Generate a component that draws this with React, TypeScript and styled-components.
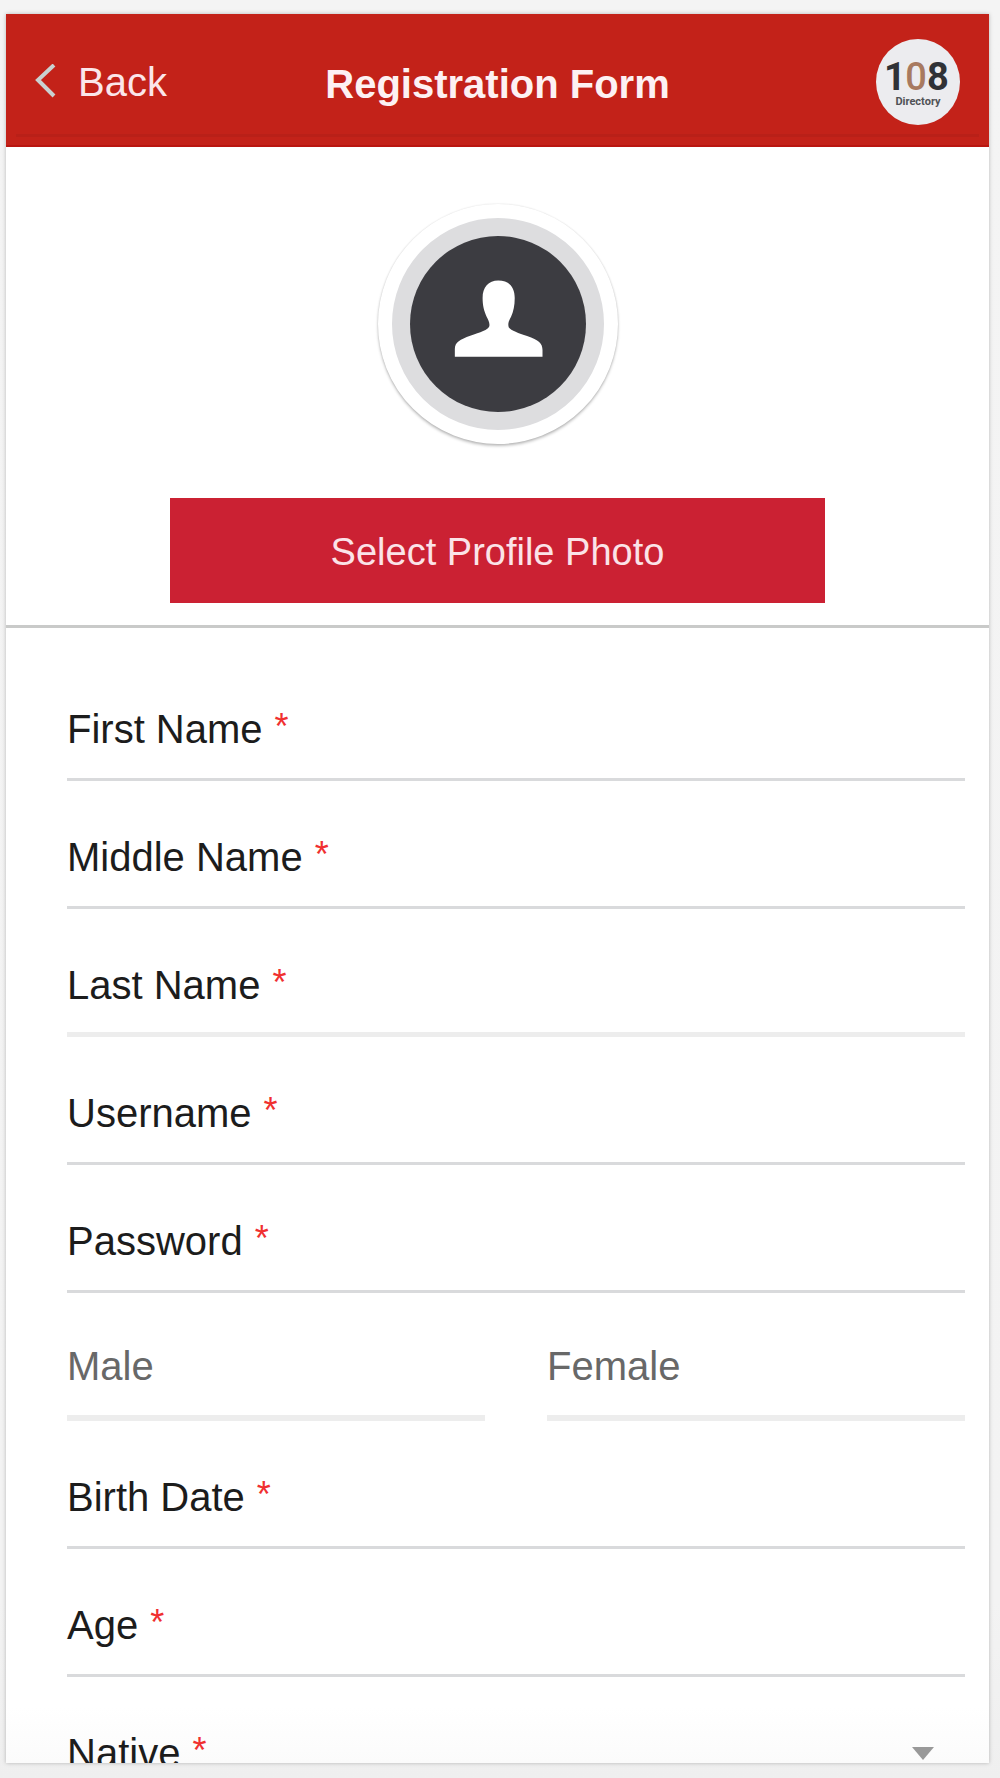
import React from "react";
import styled, { createGlobalStyle } from "styled-components";

const GlobalStyle = createGlobalStyle`
  *, *::before, *::after {
    box-sizing: border-box;
  }
  body {
    margin: 0;
    background: #f3f3f3;
    font-family: "Liberation Sans", Arial, Helvetica, sans-serif;
  }
`;

const Page = styled.div`
  display: flex;
  height: 100vh;
  padding: 14px 11px 15px 6px;
  background: linear-gradient(to bottom, #f4f4f4 0%, #f3f3f3 90%, #efefef 100%);
`;

const Screen = styled.main`
  flex: 1;
  min-width: 0;
  overflow: hidden;
  background: linear-gradient(to top, #fbfbfb 0, #ffffff 56px);
  box-shadow: 0 0 4px rgba(0, 0, 0, 0.25);
`;

const Header = styled.header`
  display: grid;
  grid-template-columns: 1fr auto 1fr;
  align-items: center;
  height: 133px;
  padding: 4px 29px 0;
  background: linear-gradient(#b92018, #b92018) center bottom 8px / calc(100% - 20px) 3px no-repeat #c32219;
  border-bottom: 2px solid #b91610;
`;

const BackButton = styled.button`
  display: flex;
  align-items: center;
  justify-self: start;
  gap: 21px;
  padding: 0;
  border: 0;
  background: none;
  color: #fbe6ea;
  font-family: inherit;
  font-size: 40px;
  line-height: 48px;
  cursor: pointer;
`;

const Title = styled.h1`
  margin: 0;
  padding-top: 4px;
  color: #fdf1f3;
  font-size: 40px;
  font-weight: 700;
  line-height: 48px;
  white-space: nowrap;
`;

const Logo = styled.svg`
  justify-self: end;
`;

const Profile = styled.section`
  display: flex;
  flex-direction: column;
  align-items: center;
  gap: 54px;
  padding: 57px 0 22px;
  border-bottom: 3px solid #c9cac9;
`;

const Avatar = styled.div`
  display: flex;
  align-items: center;
  justify-content: center;
  width: 240px;
  height: 240px;
  border: 14px solid #ffffff;
  border-radius: 50%;
  background: #dddddf;
  box-shadow: 0 2px 3px rgba(0, 0, 0, 0.25), 0 0 2px rgba(0, 0, 0, 0.12);
`;

const PhotoButton = styled.button`
  width: calc(100% * 2 / 3);
  height: 105px;
  padding: 2px 0 0;
  border: 0;
  background: #cb2133;
  color: #fbe3e8;
  font-family: inherit;
  font-size: 38px;
  line-height: 48px;
  cursor: pointer;
`;

const Form = styled.form`
  padding: 25px 24px 0 61px;
`;

const Row = styled.div<{ $soft?: boolean }>`
  position: relative;
  display: flex;
  align-items: flex-end;
  gap: 8px;
  height: 128px;
  padding-bottom: ${({ $soft }) => ($soft ? "23px" : "25px")};
  border-bottom: ${({ $soft }) => ($soft ? "5px solid #ededed" : "3px solid #d9dadc")};
`;

const Label = styled.label`
  display: flex;
  flex: none;
  align-items: flex-start;
  gap: 12px;
  color: #1c1c1c;
  font-size: 40px;
  line-height: 48px;
`;

const Required = styled.span`
  color: #f03030;
  font-size: 36px;
  line-height: 44px;
`;

const Input = styled.input`
  flex: 1;
  min-width: 0;
  height: 48px;
  padding: 0;
  border: 0;
  outline: 0;
  background: transparent;
  color: #1c1c1c;
  font-family: inherit;
  font-size: 40px;
`;

const Select = styled.select`
  flex: 1;
  min-width: 0;
  height: 48px;
  padding: 0;
  border: 0;
  outline: 0;
  appearance: none;
  background: transparent;
  color: #1c1c1c;
  font-family: inherit;
  font-size: 40px;
`;

const SelectArrow = styled.svg`
  position: absolute;
  right: 31px;
  bottom: 42px;
  pointer-events: none;
`;

const GenderRow = styled.div`
  display: grid;
  grid-template-columns: 1fr 1fr;
  gap: 62px;
`;

const GenderOption = styled.label`
  position: relative;
  display: flex;
  align-items: flex-end;
  height: 128px;
  padding-bottom: 25px;
  border-bottom: 6px solid #ededed;
  color: #686868;
  font-size: 40px;
  line-height: 48px;
  cursor: pointer;
`;

const GenderRadio = styled.input`
  position: absolute;
  inset: 0;
  width: 100%;
  height: 100%;
  margin: 0;
  opacity: 0;
  cursor: pointer;
`;

type FieldProps = { id: string; label: string; type?: string; soft?: boolean };

function Field({ id, label, type = "text", soft }: FieldProps) {
  return (
    <Row $soft={soft}>
      <Label htmlFor={id}>
        {label}
        <Required>*</Required>
      </Label>
      <Input id={id} name={id} type={type} required />
    </Row>
  );
}

export default function App() {
  return (
    <>
      <GlobalStyle />
      <Page>
        <Screen>
          <Header>
            <BackButton type="button">
              <svg width="22" height="36" viewBox="0 0 22 36" fill="none" aria-hidden="true">
                <path d="M19 1 L3 16 L19 32" stroke="#c9d1d1" strokeWidth="4" />
              </svg>
              Back
            </BackButton>
            <Title>Registration Form</Title>
            <Logo width="84" height="86" viewBox="0 0 84 86" role="img" aria-label="108 Directory">
              <ellipse cx="42" cy="43" rx="42" ry="43" fill="#ececef" />
              <g fontFamily="Roboto, sans-serif" textAnchor="middle">
                <text y="51" fontSize="38" fontWeight="700" fill="#303236">
                  <tspan x="19">1</tspan>
                  <tspan x="40" fontWeight="500" fill="#a87a60">0</tspan>
                  <tspan x="62">8</tspan>
                </text>
                <text x="42" y="66" fontSize="11" fontWeight="700" fill="#505256">Directory</text>
              </g>
            </Logo>
          </Header>

          <Profile>
            <Avatar>
              <svg width="176" height="176" viewBox="150 135 526 526" aria-hidden="true">
                <circle cx="413" cy="398" r="263" fill="#3c3c41" />
                <path
                  fill="#ffffff"
                  d="M414 268 C446 268 463 288 463 320 C463 343 459 360 452 376 C445 390 442 396 445 408 C452 418 475 426 500 434 C535 446 546 456 546 476 V496 H284 V473 C284 452 300 444 330 433 C360 423 384 416 387 405 C389 394 384 386 379 376 C371 358 367 343 367 320 C367 288 384 268 414 268Z"
                />
              </svg>
            </Avatar>
            <PhotoButton type="button">Select Profile Photo</PhotoButton>
          </Profile>

          <Form>
            <Field id="firstName" label="First Name" />
            <Field id="middleName" label="Middle Name" />
            <Field id="lastName" label="Last Name" soft />
            <Field id="username" label="Username" />
            <Field id="password" label="Password" type="password" />
            <GenderRow role="radiogroup" aria-label="Gender">
              <GenderOption>
                <GenderRadio type="radio" name="gender" value="male" />
                Male
              </GenderOption>
              <GenderOption>
                <GenderRadio type="radio" name="gender" value="female" />
                Female
              </GenderOption>
            </GenderRow>
            <Field id="birthDate" label="Birth Date" />
            <Field id="age" label="Age" />
            <Row>
              <Label htmlFor="native">
                Native
                <Required>*</Required>
              </Label>
              <Select id="native" name="native" defaultValue="" required>
                <option value="" />
              </Select>
              <SelectArrow width="22" height="13" viewBox="0 0 22 13" aria-hidden="true">
                <path d="M0 0 H22 L11 13 Z" fill="#999999" />
              </SelectArrow>
            </Row>
          </Form>
        </Screen>
      </Page>
    </>
  );
}
